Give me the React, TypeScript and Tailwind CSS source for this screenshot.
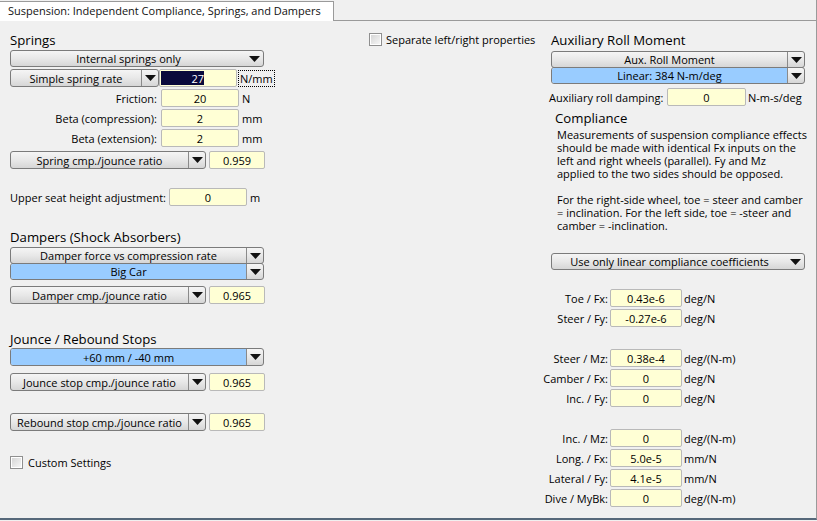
import React from "react";

function Arrow() {
  return (
    <svg width="11" height="6" viewBox="0 0 11 6" className="block">
      <path d="M0 0H11L5.5 6Z" fill="#111" />
    </svg>
  );
}

function Combo({
  w,
  label,
  blue = false,
  sep = false,
  h = "h-[17px]",
  extra = "",
}: {
  w: string;
  label: string;
  blue?: boolean;
  sep?: boolean;
  h?: string;
  extra?: string;
}) {
  return (
    <div
      className={`${w} ${h} ${extra} shrink-0 flex border border-[#7b7b7b] rounded-[3px] overflow-hidden bg-linear-to-b from-[#f5f5f5] via-[#e8e8e8] to-[#d6d6d6]`}
    >
      <div
        className={`flex-1 flex items-center justify-center leading-none whitespace-nowrap ${
          blue ? "bg-[#99ccff]" : ""
        }`}
      >
        {label}
      </div>
      <div
        className={`w-[17px] flex items-center justify-center ${
          sep ? "border-l border-[#8a8a8a]" : ""
        }`}
      >
        <Arrow />
      </div>
    </div>
  );
}

function Field({ w, v }: { w: string; v: string }) {
  return (
    <div
      className={`${w} h-[18px] shrink-0 bg-[#ffffd5] border border-[#b9b9b9] rounded-[2px] flex items-center justify-center leading-none`}
    >
      {v}
    </div>
  );
}

function Check() {
  return (
    <div className="w-[13px] h-[13px] shrink-0 border border-[#8f8f8f] bg-white p-[1px]">
      <div className="w-full h-full bg-linear-to-br from-[#d6d6d6] to-[#f6f6f6]" />
    </div>
  );
}

function LRow({ label, v, unit, mt }: { label: string; v: string; unit: string; mt: string }) {
  return (
    <div className={`${mt} h-[18px] flex items-center`}>
      <div className="w-[147px] text-right whitespace-nowrap leading-none">{label}</div>
      <div className="w-[4px]" />
      <Field w="w-[78px]" v={v} />
      <div className="ml-[3px] leading-none">{unit}</div>
    </div>
  );
}

function Ratio({ label, v, mt }: { label: string; v: string; mt: string }) {
  return (
    <div className={`${mt} h-[18px] flex items-center`}>
      <Combo w="w-[196px]" h="h-[18px]" label={label} sep />
      <div className="w-[3px]" />
      <Field w="w-[56px]" v={v} />
    </div>
  );
}

function CRow({ label, v, unit, mt }: { label: string; v: string; unit: string; mt: string }) {
  return (
    <div className={`${mt} h-[18px] flex items-center`}>
      <div className="w-[59px] flex justify-end whitespace-nowrap leading-none">
        <span>{label}</span>
      </div>
      <div className="w-[2px]" />
      <Field w="w-[72px]" v={v} />
      <div className="ml-[2px] leading-none whitespace-nowrap">{unit}</div>
    </div>
  );
}

function Heading({ text, mt, ml = "" }: { text: string; mt: string; ml?: string }) {
  return (
    <div className={`${mt} ${ml} h-[18px] leading-[18px] text-[13.2px] whitespace-nowrap`}>{text}</div>
  );
}

export default function App() {
  return (
    <div className="w-[817px] h-[521px] bg-[#f0f0f0] overflow-hidden font-['Open_Sans',sans-serif] text-[11px] text-black flex flex-col">
      <div className="h-[21px] flex shrink-0">
        <div className="w-[334px] h-[20px] mt-[1px] bg-white border-t border-r border-[#9a9a9a] pl-[8px] leading-[18px] whitespace-nowrap text-[#111]">
          Suspension: Independent Compliance, Springs, and Dampers
        </div>
        <div className="flex-1 border-b border-r border-[#9a9a9a]" />
      </div>
      <div className="h-[499px] shrink-0 border-r border-[#9a9a9a] border-b-2 border-b-[#56687a] flex items-start">
        {/* Left column */}
        <div className="ml-[10px] w-[256px] flex flex-col">
          <Heading text="Springs" mt="mt-[10px]" />
          <Combo w="w-[254px]" label="Internal springs only" extra="mt-[1px]" />
          <div className="mt-[2px] h-[18px] flex items-center">
            <Combo w="w-[149px]" h="h-[18px]" label="Simple spring rate" sep />
            <div className="w-[2px]" />
            <div className="w-[78px] h-[18px] shrink-0 bg-[#ffffd5] border border-[#b9b9b9] rounded-[2px] flex items-stretch p-[1px]">
              <div className="w-[43px] bg-[#0a0a3c] text-white flex items-center justify-end leading-none">
                27
              </div>
            </div>
            <div className="ml-[1px] h-[17px] px-[1px] border border-dotted border-black flex items-center leading-none">
              N/mm
            </div>
          </div>
          <LRow label="Friction:" v="20" unit="N" mt="mt-[2px]" />
          <LRow label="Beta (compression):" v="2" unit="mm" mt="mt-[2px]" />
          <LRow label="Beta (extension):" v="2" unit="mm" mt="mt-[2px]" />
          <Ratio label="Spring cmp./jounce ratio" v="0.959" mt="mt-[4px]" />
          <div className="mt-[19px] h-[18px] flex items-center">
            <div className="w-[159px] whitespace-nowrap leading-none">Upper seat height adjustment:</div>
            <Field w="w-[78px]" v="0" />
            <div className="ml-[3px] leading-none">m</div>
          </div>
          <Heading text="Dampers (Shock Absorbers)" mt="mt-[22px]" />
          <Combo w="w-[254px]" label="Damper force vs compression rate" sep extra="mt-[1px]" />
          <Combo w="w-[254px]" label="Big Car" blue sep extra="-mt-[1px]" />
          <Ratio label="Damper cmp./jounce ratio" v="0.965" mt="mt-[6px]" />
          <Heading text="Jounce / Rebound Stops" mt="mt-[26px]" />
          <Combo w="w-[254px]" h="h-[18px]" label="+60 mm / -40 mm" blue sep />
          <Ratio label="Jounce stop cmp./jounce ratio" v="0.965" mt="mt-[7px]" />
          <Ratio label="Rebound stop cmp./jounce ratio" v="0.965" mt="mt-[22px]" />
          <div className="mt-[24px] h-[15px] flex items-center gap-[5px]">
            <Check />
            <span className="leading-none">Custom Settings</span>
          </div>
        </div>

        {/* Middle */}
        <div className="ml-[103px] w-[170px] mt-[12px] flex items-center gap-[4px]">
          <Check />
          <span className="leading-none whitespace-nowrap">Separate left/right properties</span>
        </div>

        {/* Right column */}
        <div className="ml-[10px] w-[262px] flex flex-col">
          <Heading text="Auxiliary Roll Moment" mt="mt-[10px]" ml="ml-[2px]" />
          <Combo w="w-[254px]" label="Aux. Roll Moment" sep extra="mt-[2px] ml-[2px]" />
          <Combo w="w-[254px]" label="Linear: 384 N-m/deg" blue sep extra="-mt-[1px] ml-[2px]" />
          <div className="mt-[4px] h-[18px] flex items-center">
            <div className="w-[114px] text-right whitespace-nowrap leading-none">Auxiliary roll damping:</div>
            <div className="w-[4px]" />
            <Field w="w-[79px]" v="0" />
            <div className="ml-[2px] leading-none whitespace-nowrap">N-m-s/deg</div>
          </div>
          <Heading text="Compliance" mt="mt-[3px]" ml="ml-[6px]" />
          <div className="ml-[8px] mt-[1px] leading-[13px] whitespace-nowrap">
            Measurements of suspension compliance effects
            <br />
            should be made with identical Fx inputs on the
            <br />
            left and right wheels (parallel). Fy and Mz
            <br />
            applied to the two sides should be opposed.
            <br />
            <br />
            For the right-side wheel, toe = steer and camber
            <br />= inclination. For the left side, toe = -steer and
            <br />
            camber = -inclination.
          </div>
          <Combo w="w-[254px]" label="Use only linear compliance coefficients" extra="mt-[21px] ml-[2px]" />
          <CRow label="Toe / Fx:" v="0.43e-6" unit="deg/N" mt="mt-[19px]" />
          <CRow label="Steer / Fy:" v="-0.27e-6" unit="deg/N" mt="mt-[2px]" />
          <CRow label="Steer / Mz:" v="0.38e-4" unit="deg/(N-m)" mt="mt-[22px]" />
          <CRow label="Camber / Fx:" v="0" unit="deg/N" mt="mt-[2px]" />
          <CRow label="Inc. / Fy:" v="0" unit="deg/N" mt="mt-[2px]" />
          <CRow label="Inc. / Mz:" v="0" unit="deg/(N-m)" mt="mt-[22px]" />
          <CRow label="Long. / Fx:" v="5.0e-5" unit="mm/N" mt="mt-[2px]" />
          <CRow label="Lateral / Fy:" v="4.1e-5" unit="mm/N" mt="mt-[2px]" />
          <CRow label="Dive / MyBk:" v="0" unit="deg/(N-m)" mt="mt-[2px]" />
        </div>
      </div>
    </div>
  );
}
